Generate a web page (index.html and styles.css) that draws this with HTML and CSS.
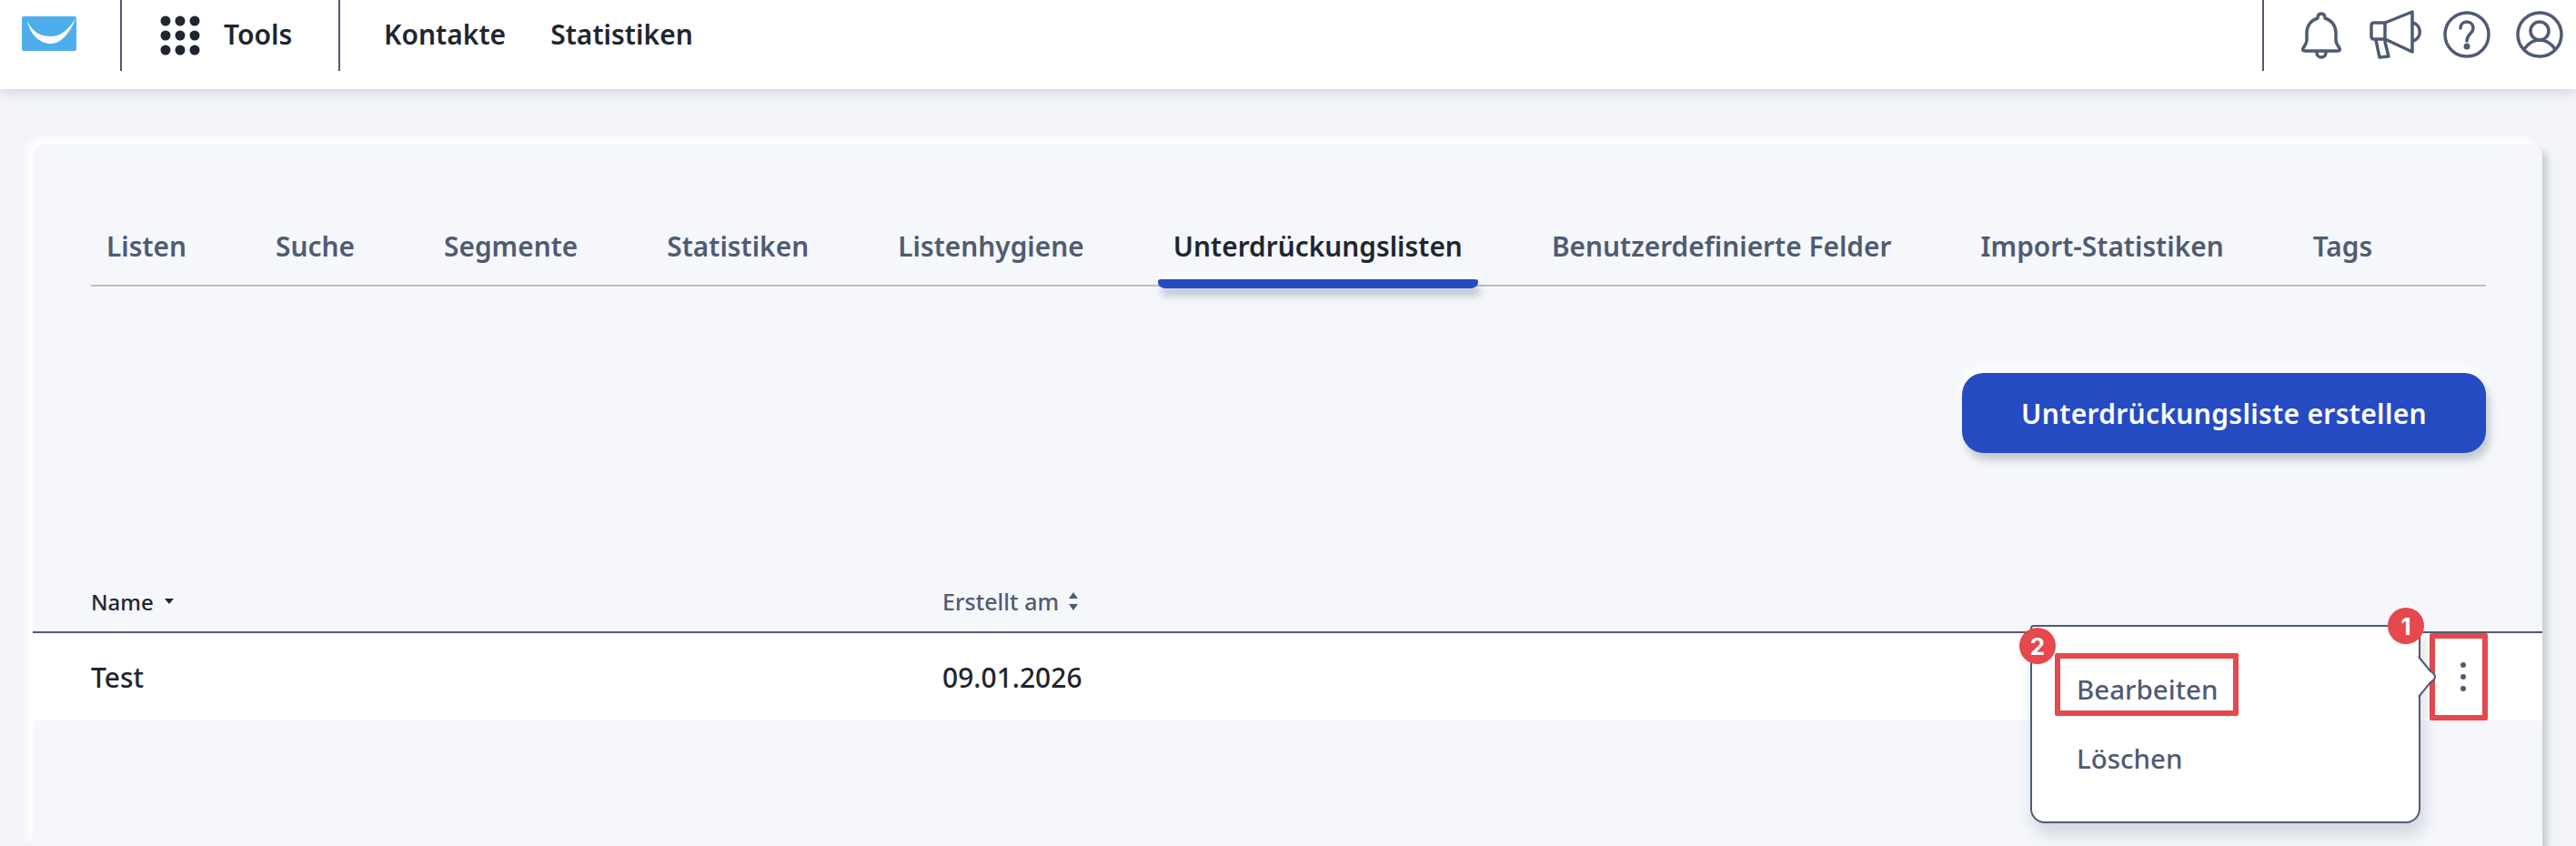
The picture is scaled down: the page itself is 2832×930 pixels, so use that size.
FILE: index.html
```html
<!DOCTYPE html>
<html lang="de">

<head>
  <meta charset="UTF-8" />
  <title>Unterdrückungslisten</title>
  <link rel="stylesheet" href="styles.css">
</head>

<body>
  <header class="topbar">
    <div class="logo-box">
      <svg class="logo" width="60" height="38" viewBox="0 0 60 38">
        <rect width="60" height="38" rx="2" fill="#4eaeec" />
        <path d="M6 5C9 20 20 30 32 30C45 30 54 15 60 1C51 15 43 22 32 22C21 22 12 18 6 5Z" fill="#fff" />
      </svg>
    </div>
    <div class="tools-box">
      <svg width="44" height="44" viewBox="0 0 44 44" fill="#1f2630">
        <circle cx="6" cy="6" r="5.5" /><circle cx="22" cy="6" r="5.5" /><circle cx="38" cy="6" r="5.5" />
        <circle cx="6" cy="22" r="5.5" /><circle cx="22" cy="22" r="5.5" /><circle cx="38" cy="22" r="5.5" />
        <circle cx="6" cy="38" r="5.5" /><circle cx="22" cy="38" r="5.5" /><circle cx="38" cy="38" r="5.5" />
      </svg>
      <span>Tools</span>
    </div>
    <nav class="main-nav">
      <a>Kontakte</a>
      <a>Statistiken</a>
    </nav>
    <div class="top-icons">
      <svg class="bell" width="42" height="52" viewBox="0 0 42 52">
        <path d="M21 2C24 2 25 4 25 7C32 9 37 15 37 23L37 31C37 35 40 38 41 40C42 42 41 43 39 43L3 43C1 43 0 42 1 40C2 38 5 35 5 31L5 23C5 15 10 9 17 7C17 4 18 2 21 2Z" />
        <path d="M16 45A5 5 0 0 0 26 45" />
      </svg>
      <svg class="megaphone" width="60" height="56" viewBox="0 0 60 56">
        <path d="M18 15L48 3L48 47L18 33Z" />
        <path d="M18 15L6 15Q3 15 3 18L3 30Q3 33 6 33L18 33" />
        <path d="M8 34L12 53L22 52L18 36" />
        <path d="M49 15A10.500 10.500 0 0 1 49 35" />
      </svg>
      <svg class="help" width="52" height="52" viewBox="0 0 52 52">
        <circle cx="26" cy="26" r="24" />
        <path d="M19 19C19 15 22 12 26 12C30 12 33 15 33 19C33 25 26 25 26 33" />
        <circle class="solid" cx="26" cy="39" r="3.500" />
      </svg>
      <svg class="user" width="52" height="52" viewBox="0 0 52 52">
        <circle cx="26" cy="26" r="24" />
        <circle cx="26" cy="22" r="10" />
        <path d="M9 42C14 35 20 32 26 32C32 32 38 35 43 42" />
      </svg>
    </div>
  </header>

  <main class="card">
    <div class="tabs">
      <a class="tab">Listen</a>
      <a class="tab">Suche</a>
      <a class="tab">Segmente</a>
      <a class="tab">Statistiken</a>
      <a class="tab">Listenhygiene</a>
      <a class="tab active">Unterdrückungslisten</a>
      <a class="tab">Benutzerdefinierte Felder</a>
      <a class="tab">Import-Statistiken</a>
      <a class="tab">Tags</a>
    </div>

    <div class="actions">
      <button class="primary-btn">Unterdrückungsliste erstellen</button>
    </div>

    <div class="table">
      <div class="table-head">
        <div class="col-name sorted">Name
          <svg width="10" height="6" viewBox="0 0 10 6" fill="#1f2630"><path d="M0 0H10L5 6Z" /></svg>
        </div>
        <div class="col-date">Erstellt am
          <svg width="12" height="20" viewBox="0 0 12 20" fill="#4f5b72"><path d="M6 0L11 7H1Z" /><path d="M1 13H11L6 20Z" /></svg>
        </div>
      </div>
      <div class="table-row">
        <div class="col-name">Test</div>
        <div class="col-date">09.01.2026</div>
        <div class="kebab-cell">
          <div class="kebab"><i></i><i></i><i></i></div>
        </div>

        <div class="menu">
          <svg class="menu-notch" width="22" height="46" viewBox="0 0 22 46">
            <rect x="0" y="3" width="4" height="40" />
            <path d="M2 1L15 17Q25 23 15 29L2 45" />
          </svg>
          <a class="menu-item highlighted">Bearbeiten</a>
          <a class="menu-item">Löschen</a>
          <span class="badge badge-two">2</span>
          <span class="badge badge-one">1</span>
        </div>
      </div>
    </div>
  </main>
</body>

</html>
```

FILE: styles.css
```css
* {
  box-sizing: border-box;
}

html,
body {
  height: 930px;
  overflow: hidden;
}

body {
  margin: 0;
  background-color: #f2f4f8;
  font-family: "Noto Sans", sans-serif;
  color: #1f2630;
}

/* top bar */
.topbar {
  display: flex;
  align-items: flex-start;
  height: 98px;
  background-color: #fff;
  box-shadow: 0 3px 12px rgba(79, 91, 114, 0.2);
}

.logo-box {
  width: 134px;
  height: 78px;
  padding: 18px 0 0 24px;
  border-right: 2px solid #4f5b72;
}

.logo {
  display: block;
}

.tools-box {
  display: flex;
  align-items: center;
  gap: 26px;
  width: 240px;
  height: 78px;
  padding: 0 0 4px 42px;
  border-right: 2px solid #4f5b72;
  font-size: 30px;
  font-weight: 600;
}

.tools-box svg {
  margin-top: 4px;
}

.main-nav {
  display: flex;
  gap: 49px;
  height: 74px;
  margin-left: 48px;
  align-items: center;
  font-size: 30px;
  font-weight: 600;
}

.top-icons {
  display: flex;
  align-items: flex-start;
  height: 78px;
  margin-left: auto;
  padding: 12px 14px 0 42px;
  border-left: 2px solid #4f5b72;
}

.top-icons svg {
  fill: none;
  stroke: #4f5b72;
  stroke-width: 3.500;
  stroke-linejoin: round;
  stroke-linecap: round;
  overflow: visible;
}

.top-icons .solid {
  fill: #4f5b72;
  stroke: none;
}

.bell {
  margin-top: 1px;
}

.megaphone {
  margin: -2px 0 0 31px;
}

.help {
  margin-left: 22px;
}

.user {
  margin-left: 28px;
}

/* main card */
.card {
  width: 2759px;
  height: 772px;
  margin: 60px 0 0 36px;
  background-color: #f5f7fb;
  border-radius: 14px 14px 0 0;
  box-shadow: -6px -6px 10px #fff, 6px 6px 6px rgba(79, 91, 114, 0.25);
}

.tabs {
  display: flex;
  gap: 64px;
  height: 157px;
  margin: 0 62px 0 64px;
  padding-top: 86px;
  border-bottom: 2px solid #bdbec3;
  box-shadow: 0 2px 0 #fff;
  font-size: 29.850px;
  font-weight: 600;
  color: #4f5b72;
  line-height: 54px;
}

.tab {
  position: relative;
  height: 73px;
  padding: 0 17px;
  white-space: nowrap;
}

.tab.active {
  color: #1f2630;
}

.tab.active::after {
  content: "";
  position: absolute;
  left: 0;
  right: 0;
  bottom: 0;
  height: 10px;
  background-color: #254bc3;
  border-radius: 3px 3px 8px 8px;
  box-shadow: 3px 8px 8px rgba(79, 91, 114, 0.35), 0 -6px 8px #fff;
}

.actions {
  display: flex;
  justify-content: flex-end;
  padding: 95px 62px 0 0;
}

.primary-btn {
  width: 576px;
  height: 88px;
  padding: 0;
  background-color: #254bc3;
  border: 0;
  border-radius: 24px;
  box-shadow: 4px 8px 10px rgba(79, 91, 114, 0.3), -2px -6px 10px #fff;
  color: #fff;
  font-family: inherit;
  font-size: 30px;
  font-weight: 600;
  letter-spacing: 0.3px;
}

/* table */
.table {
  margin-top: 138px;
}

.table-head,
.table-row {
  display: flex;
  align-items: center;
  padding-left: 64px;
}

.table-head {
  height: 60px;
  border-bottom: 2px solid #4f5b72;
  font-size: 24px;
  font-weight: 500;
  padding-bottom: 8px;
}

.table-row {
  position: relative;
  height: 96px;
  background-color: #fff;
  font-size: 30px;
  font-weight: 500;
}

.col-name {
  display: flex;
  align-items: center;
  gap: 12px;
  width: 936px;
}

.col-date {
  display: flex;
  align-items: center;
  gap: 10px;
}

.table-head .col-date {
  color: #4f5b72;
  font-size: 25px;
}

.kebab-cell {
  display: flex;
  justify-content: center;
  width: 64px;
  height: 96px;
  margin: 0 60px 0 auto;
  padding-left: 10px;
  outline: 6px solid #e5484d;
  outline-offset: -6px;
  border-radius: 2px;
}

.kebab {
  display: flex;
  flex-direction: column;
  gap: 7px;
  padding-top: 32px;
}

.kebab i {
  display: block;
  width: 6px;
  height: 6px;
  border-radius: 50%;
  background-color: #4f5b72;
}

/* popup menu over the row */
.menu {
  position: absolute;
  left: 2196px;
  top: -9px;
  width: 429px;
  height: 218px;
  padding: 29px 0 0 25px;
  background-color: #fff;
  border: 2px solid #4f5b72;
  border-radius: 4px 4px 16px 16px;
  box-shadow: 4px 12px 18px rgba(79, 91, 114, 0.22);
  color: #4f5b72;
}

.menu-notch {
  position: absolute;
  top: 32px;
  right: -20px;
  overflow: visible;
  fill: #fff;
  stroke: #4f5b72;
  stroke-width: 2;
}

.menu-notch rect {
  stroke: none;
}

.menu-item {
  display: block;
  width: 202px;
  height: 69px;
  padding-left: 24px;
  font-size: 29.500px;
  line-height: 80px;
}

.menu-item + .menu-item {
  margin-top: 7px;
}

.menu-item.highlighted {
  box-shadow: inset 0 0 0 6px #e5484d;
  border-radius: 2px;
}

.badge {
  position: absolute;
  display: flex;
  align-items: center;
  justify-content: center;
  width: 40px;
  height: 40px;
  border-radius: 50%;
  background-color: #e5484d;
  color: #fff;
  font-family: "Inter", sans-serif;
  font-size: 26px;
  font-weight: 700;
}

.badge-one {
  top: -21px;
  right: -6px;
}

.badge-two {
  top: 1px;
  left: -14px;
}
```
